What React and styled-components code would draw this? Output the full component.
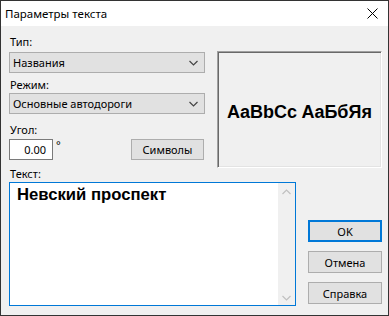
import React from 'react';
import styled, { createGlobalStyle } from 'styled-components';

const Global = createGlobalStyle`
  html, body {
    margin: 0;
    padding: 0;
    background: #fff;
  }
  * {
    box-sizing: border-box;
  }
`

const Window = styled.div`
  width: 389px;
  height: 316px;
  border: 1px solid #333;
  background: #f0f0f0;
  display: flex;
  flex-direction: column;
  font-family: "Noto Sans", "Liberation Sans", sans-serif;
  font-size: 11px;
  color: #000;
`
const TitleBar = styled.div`
  height: 25px;
  background: #fff;
  display: flex;
  align-items: center;
  justify-content: space-between;
  padding: 0 10px 0 4px;
`
const Title = styled.span`
  font-size: 11.5px;
`
const Body = styled.div`
  flex: 1;
  padding: 8px 6px 9px 8px;
  display: flex;
  flex-direction: column;
`
const Top = styled.div`
  display: grid;
  grid-template-columns: 196px 165px;
  column-gap: 12px;
  align-items: start;
`
const Column = styled.div`
  display: flex;
  flex-direction: column;
`
const Label = styled.div`
  height: 16px;
  line-height: 16px;
  margin-top: ${props => props.$top || 0}px;
  padding-left: 1px;
`
const Select = styled.div`
  height: 21px;
  margin-top: ${props => props.$top || 0}px;
  background: #e1e1e1;
  border: 1px solid #adadad;
  display: flex;
  align-items: center;
  justify-content: space-between;
  padding: 0 6px 0 3px;
`
const AngleRow = styled.div`
  margin-top: 1px;
  display: flex;
  align-items: flex-start;
  justify-content: space-between;
  padding-right: 1px;
`
const AngleGroup = styled.div`
  display: flex;
  align-items: flex-start;
`
const AngleInput = styled.div`
  width: 44px;
  height: 21px;
  background: #fff;
  border: 1px solid #7a7a7a;
  text-align: right;
  padding-right: 6px;
  line-height: 19px;
`
const Degree = styled.span`
  margin-left: 3px;
  line-height: 12px;
`
const Button = styled.div`
  width: ${props => props.$width || 74}px;
  height: ${props => props.$height || 22}px;
  background: #e1e1e1;
  border: ${props => props.$primary ? '2px solid #0078d7' : '1px solid #adadad'};
  display: flex;
  align-items: center;
  justify-content: center;
`
const Preview = styled.div`
  margin-top: 17px;
  height: 117px;
  border-top: 1px solid #a0a0a0;
  border-left: 1px solid #a0a0a0;
  border-bottom: 1px solid #fff;
  border-right: 1px solid #fff;
  box-shadow: inset 1px 1px 0 #696969, inset -1px -1px 0 #e3e3e3;
  display: flex;
  align-items: center;
  justify-content: center;
  padding-top: 6px;
  font-family: "Liberation Sans", Arial, sans-serif;
  font-weight: bold;
  font-size: 18px;
`
const Bottom = styled.div`
  flex: 1;
  display: flex;
  justify-content: space-between;
`
const TextBox = styled.div`
  width: 287px;
  border: 1px solid #0078d7;
  background: #fff;
  display: flex;
`
const TextContent = styled.div`
  flex: 1;
  padding: 2px 7px;
  font-family: "Liberation Sans", Arial, sans-serif;
  font-weight: bold;
  font-size: 16.7px;
  line-height: 19px;
`
const ScrollBar = styled.div`
  width: 17px;
  background: #f0f0f0;
  display: flex;
  flex-direction: column;
  justify-content: space-between;
  align-items: center;
  padding: 6px 0 4px;
`
const Buttons = styled.div`
  display: flex;
  flex-direction: column;
  justify-content: flex-end;
  gap: 9px;
  padding-bottom: 2px;
`

const Chevron = ({ up, color = '#444' }) => (
  <svg width="9" height="6" viewBox="0 0 9 6">
    <path
      d={up ? 'M0.5 5 L4.5 1 L8.5 5' : 'M0.5 1 L4.5 5 L8.5 1'}
      fill="none"
      stroke={color}
      strokeWidth="1.2"
    />
  </svg>
)

const CloseIcon = () => (
  <svg width="11" height="11" viewBox="0 0 11 11">
    <path d="M0.5 0.5 L10.5 10.5 M10.5 0.5 L0.5 10.5" stroke="#000" strokeWidth="1" />
  </svg>
)

export default function App() {
  return (
    <Window>
      <Global />
      <TitleBar>
        <Title>Параметры текста</Title>
        <CloseIcon />
      </TitleBar>
      <Body>
        <Top>
          <Column>
            <Label>Тип:</Label>
            <Select $top={2}>
              <span>Названия</span>
              <Chevron />
            </Select>
            <Label $top={4}>Режим:</Label>
            <Select>
              <span>Основные автодороги</span>
              <Chevron />
            </Select>
            <Label $top={8}>Угол:</Label>
            <AngleRow>
              <AngleGroup>
                <AngleInput>0.00</AngleInput>
                <Degree>°</Degree>
              </AngleGroup>
              <Button $width={73} $height={21}>Символы</Button>
            </AngleRow>
            <Label $top={6}>Текст:</Label>
          </Column>
          <Preview>AaBbCc AaБбЯя</Preview>
        </Top>
        <Bottom>
          <TextBox>
            <TextContent>Невский проспект</TextContent>
            <ScrollBar>
              <Chevron up color="#c0c0c0" />
              <Chevron color="#c0c0c0" />
            </ScrollBar>
          </TextBox>
          <Buttons>
            <Button $primary>OK</Button>
            <Button>Отмена</Button>
            <Button>Справка</Button>
          </Buttons>
        </Bottom>
      </Body>
    </Window>
  );
}
